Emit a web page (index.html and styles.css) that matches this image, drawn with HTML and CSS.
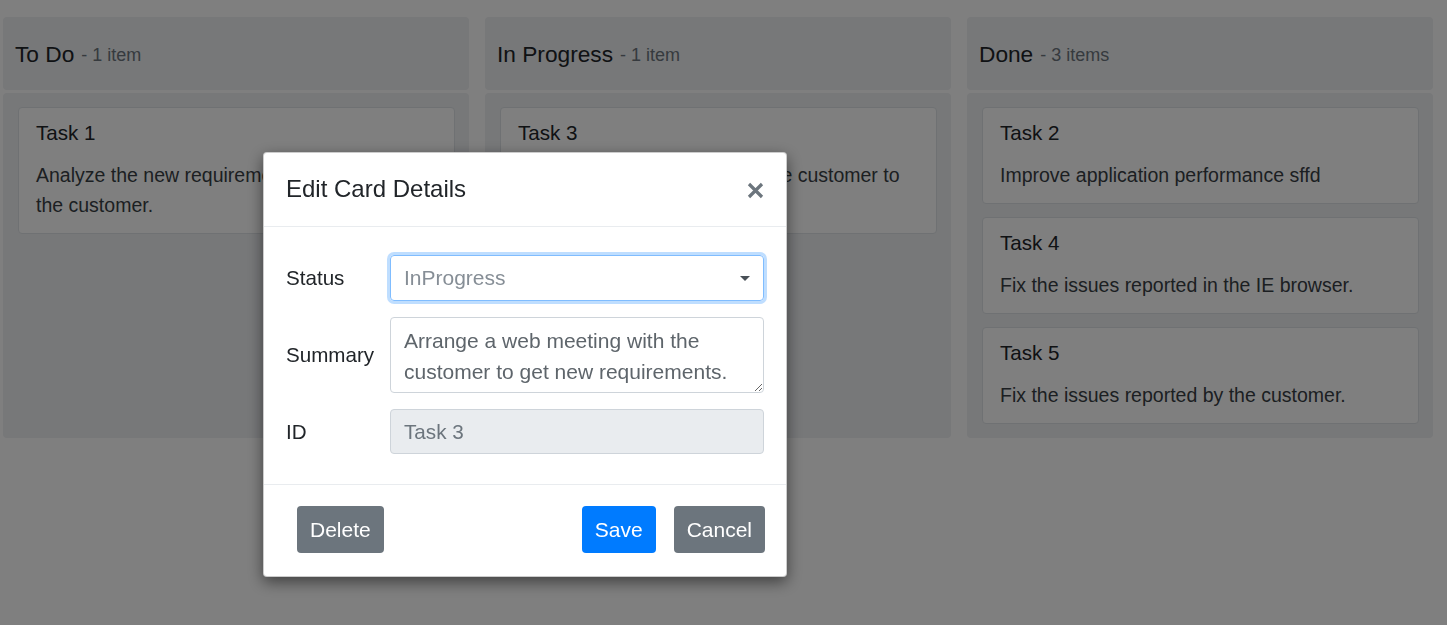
FILE: index.html
```html
<!DOCTYPE html>
<html lang="en">
<head>
<meta charset="utf-8">
<title>Kanban - Edit Card</title>
<link rel="stylesheet" href="styles.css">
</head>
<body>
<div class="board">
  <section class="column">
    <header class="col-header"><span class="col-title">To Do</span><span class="col-count">- 1 item</span></header>
    <div class="col-body">
      <article class="card">
        <div class="card-title">Task 1</div>
        <div class="card-text">Analyze the new requirements received from the customer.</div>
      </article>
    </div>
  </section>
  <section class="column">
    <header class="col-header"><span class="col-title">In Progress</span><span class="col-count">- 1 item</span></header>
    <div class="col-body">
      <article class="card">
        <div class="card-title">Task 3</div>
        <div class="card-text">Arrange a web meeting with the customer to get new requirements.</div>
      </article>
    </div>
  </section>
  <section class="column">
    <header class="col-header"><span class="col-title">Done</span><span class="col-count">- 3 items</span></header>
    <div class="col-body">
      <article class="card">
        <div class="card-title">Task 2</div>
        <div class="card-text">Improve application performance sffd</div>
      </article>
      <article class="card">
        <div class="card-title">Task 4</div>
        <div class="card-text">Fix the issues reported in the IE browser.</div>
      </article>
      <article class="card">
        <div class="card-title">Task 5</div>
        <div class="card-text">Fix the issues reported by the customer.</div>
      </article>
    </div>
  </section>
</div>

<div class="overlay"></div>

<div class="dialog" role="dialog">
  <div class="dlg-header">
    <span class="dlg-title">Edit Card Details</span>
    <svg class="dlg-close" width="17" height="17" viewBox="0 0 17 17"><path d="M2 2 L15 15 M15 2 L2 15" stroke="#6c757d" stroke-width="3.2" stroke-linecap="butt"/></svg>
  </div>
  <div class="dlg-body">
    <label class="fld-label">Status</label>
    <div class="fld-select"><span>InProgress</span><svg width="10" height="5" viewBox="0 0 10 5"><path d="M0 0 H10 L5 5 Z" fill="#495057"/></svg></div>
    <label class="fld-label">Summary</label>
    <textarea class="fld-textarea">Arrange a web meeting with the customer to get new requirements.</textarea>
    <label class="fld-label">ID</label>
    <div class="fld-input fld-disabled">Task 3</div>
  </div>
  <div class="dlg-footer">
    <button class="btn btn-secondary">Delete</button>
    <span class="spacer"></span>
    <button class="btn btn-primary">Save</button>
    <button class="btn btn-secondary">Cancel</button>
  </div>
</div>
</body>
</html>
```

FILE: styles.css
```css
html, body {
  margin: 0;
  padding: 0;
  background: #ffffff;
  font-family: "Liberation Sans", Arial, sans-serif;
  color: #212529;
}

.board {
  display: grid;
  grid-template-columns: repeat(3, 466px);
  column-gap: 16px;
  padding: 17px 0 0 3px;
}

.column {
  display: flex;
  flex-direction: column;
}

.col-header {
  height: 73px;
  background: #eef0f3;
  border-radius: 4px;
  padding: 0 12px;
  display: flex;
  align-items: center;
  gap: 7px;
}

.col-title {
  font-size: 22.7px;
  color: #212529;
  padding-top: 1px;
}

.col-count {
  font-size: 18px;
  color: #6c757d;
  padding-top: 3px;
}

.col-body {
  flex: 1;
  margin-top: 3px;
  background: #eef0f3;
  border-radius: 4px;
  padding: 14px 14px 14px 15px;
  display: flex;
  flex-direction: column;
  gap: 13px;
}

.card {
  background: #ffffff;
  border: 1px solid #dee2e6;
  border-radius: 4px;
  padding: 12px 17px 13px;
}

.card-title {
  font-size: 20.6px;
  line-height: 26px;
  color: #212529;
}

.card-text {
  margin-top: 14px;
  font-size: 19.5px;
  line-height: 30px;
  color: #393f45;
}

.overlay {
  position: fixed;
  inset: 0;
  background: rgba(0, 0, 0, 0.5);
}

.dialog {
  position: fixed;
  left: 263px;
  top: 152px;
  width: 524px;
  box-sizing: border-box;
  background: #ffffff;
  border: 1px solid rgba(0, 0, 0, 0.2);
  border-radius: 4px;
  box-shadow: 0 5px 15px rgba(0, 0, 0, 0.5);
}

.dlg-header {
  height: 73px;
  border-bottom: 1px solid #e9ecef;
  padding: 0 22px;
  display: flex;
  align-items: center;
  justify-content: space-between;
}

.dlg-title {
  font-size: 24px;
  color: #212529;
  padding-bottom: 2px;
}

.dlg-close {
  margin-right: 0;
  margin-top: 2px;
}

.dlg-body {
  display: grid;
  grid-template-columns: 104px 1fr;
  row-gap: 16px;
  align-items: center;
  padding: 28px 22px 30px;
}

.fld-label {
  font-size: 20.6px;
  color: #212529;
}

.fld-select {
  height: 46px;
  box-sizing: border-box;
  border: 1px solid #80bdff;
  border-radius: 4px;
  box-shadow: 0 0 0 3px rgba(0, 123, 255, 0.25);
  padding: 0 13px 0 13px;
  display: flex;
  align-items: center;
  justify-content: space-between;
  font-size: 21px;
  color: #868e96;
}

.fld-textarea {
  display: block;
  width: 100%;
  height: 76px;
  box-sizing: border-box;
  margin: 0;
  border: 1px solid #ced4da;
  border-radius: 4px;
  padding: 7px 13px;
  font-family: "Liberation Sans", Arial, sans-serif;
  font-size: 21px;
  line-height: 31px;
  color: #5e656b;
  background: #ffffff;
  resize: vertical;
  overflow: hidden;
}

.fld-input {
  height: 45px;
  box-sizing: border-box;
  border: 1px solid #ced4da;
  border-radius: 4px;
  padding: 0 13px;
  display: flex;
  align-items: center;
  font-size: 20.7px;
  color: #6c757d;
}

.fld-disabled {
  background: #e9ecef;
}

.dlg-footer {
  border-top: 1px solid #e9ecef;
  padding: 21px 21px 23px 33px;
  display: flex;
  align-items: center;
  gap: 18px;
}

.spacer {
  flex: 1;
}

.btn {
  height: 47px;
  padding: 0 13px;
  border: none;
  border-radius: 4px;
  font-family: "Liberation Sans", Arial, sans-serif;
  font-size: 21px;
  color: #ffffff;
}

.btn-secondary {
  background: #6c757d;
}

.btn-primary {
  background: #007bff;
}
```
